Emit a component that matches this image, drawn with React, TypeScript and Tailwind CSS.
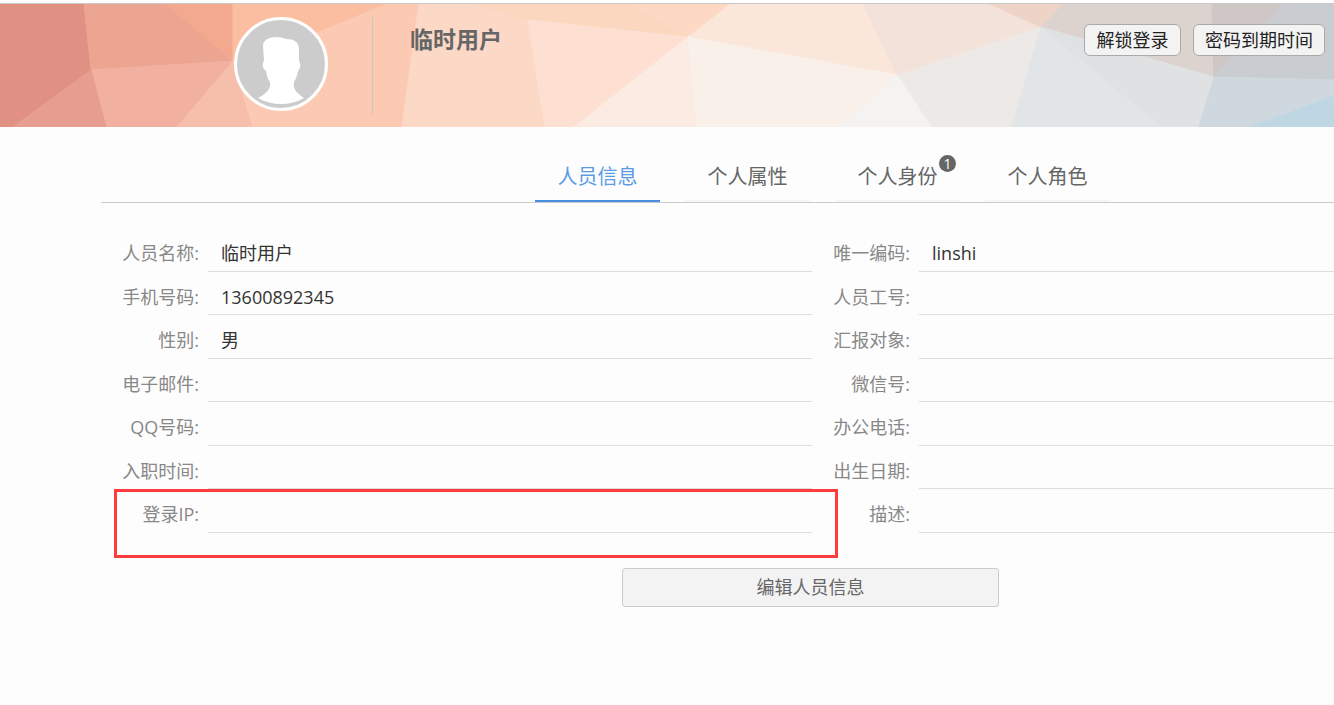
const facets: [string, string][] = [
  ["0,4 84,4 91,70 13,127 0,127", "#e19184"],
  ["84,4 166,4 233,61 91,70", "#eca591"],
  ["166,4 233,4 233,61", "#f3a98d"],
  ["233,4 387,4 319,32 233,61", "#fbbea0"],
  ["91,70 233,61 177,127 106,127", "#f2b1a0"],
  ["91,70 106,127 13,127", "#e59e90"],
  ["233,61 177,127 253,127", "#f6bfab"],
  ["233,61 319,32 387,4 419,4 402,127 253,127", "#fccab3"],
  ["419,4 472,4 528,20 545,127 402,127", "#fbd9c6"],
  ["472,4 630,4 667,24 688,37 528,20", "#fcd7bf"],
  ["528,20 688,37 574,127 545,127", "#fde0d1"],
  ["688,37 697,127 574,127", "#fbebe2"],
  ["630,4 731,4 688,37", "#fdd8c3"],
  ["731,4 863,4 897,75 688,37", "#fbe6da"],
  ["688,37 897,75 841,127 697,127", "#f9f0ea"],
  ["863,4 990,4 1041,27 897,75", "#f3e2d9"],
  ["990,4 1063,4 1041,27", "#eed3c7"],
  ["1063,4 1212,4 1214,77 1041,27", "#dcd3cf"],
  ["897,75 1041,27 1012,127 931,127", "#ece9e6"],
  ["897,75 931,127 841,127", "#f4f3f1"],
  ["1041,27 1163,127 1012,127", "#e1e5e7"],
  ["1041,27 1214,77 1199,127 1163,127", "#dfe1e2"],
  ["1212,4 1284,4 1214,77", "#cfc7c6"],
  ["1284,4 1334,4 1334,80 1214,77", "#c9cdd1"],
  ["1214,77 1334,80 1334,96 1250,127 1199,127", "#d0d8df"],
  ["1250,127 1334,96 1334,127", "#bfd7e3"],
];

const rows = [
  ["人员名称:", "临时用户", "唯一编码:", "linshi"],
  ["手机号码:", "13600892345", "人员工号:", ""],
  ["性别:", "男", "汇报对象:", ""],
  ["电子邮件:", "", "微信号:", ""],
  ["QQ号码:", "", "办公电话:", ""],
  ["入职时间:", "", "出生日期:", ""],
  ["登录IP:", "", "描述:", ""],
];

const tabs = ["人员信息", "个人属性", "个人身份", "个人角色"];

function Avatar() {
  return (
    <svg width="94" height="94" viewBox="0 0 94 94" className="shrink-0">
      <circle cx="47" cy="47" r="45.5" fill="#cccccc" stroke="#ffffff" strokeWidth="3" />
      <path
        d="M29 29 C29 23 35 20 43 20 C47 20 49 21 52 22 C60 22 65 25 65 32 L65 44 C67 46 67 51 64 54 C63 59 62 62 60 65 C59 71 61 75 70 81 C56 89 38 89 24 81 C33 76 37 72 36 65 C33 61 33 58 32 54 C28 51 28 46 30 44 Z"
        fill="#ffffff"
      />
    </svg>
  );
}

export default function App() {
  return (
    <div className="min-h-[705px] w-[1334px] overflow-hidden bg-[#fdfdfd] font-['Open_Sans','Noto_Sans_CJK_SC',sans-serif]">
      <div className="h-[3px] bg-white" />
      <div className="relative flex h-[124px] items-start overflow-hidden border-t border-[#c8c8c8] bg-[#fbd9c6]">
        <svg className="absolute inset-0 blur-[0.6px]" width="1334" height="123" viewBox="0 4 1334 123">
          {facets.map(([points, fill]) => (
            <polygon key={points} points={points} fill={fill} stroke={fill} strokeWidth="1" />
          ))}
        </svg>
        <div className="relative flex w-full items-start pl-[234px] pt-[13px]">
          <Avatar />
          <div className="ml-[44px] h-[98px] w-px bg-[#c5c9c6]" />
          <div className="ml-[37px] mt-[6px] text-[23px] font-bold leading-[32px] text-[#666666]">临时用户</div>
          <div className="ml-auto mr-[9px] mt-[7px] flex gap-3">
            <button className="h-8 w-[97px] rounded-md border border-[#aaaaaa] bg-[#f3f3f3] text-[18px] leading-[28px] text-[#222222]">
              解锁登录
            </button>
            <button className="h-8 w-[132px] rounded-md border border-[#aaaaaa] bg-[#f3f3f3] text-[18px] leading-[28px] text-[#222222]">
              密码到期时间
            </button>
          </div>
        </div>
      </div>

      <div className="ml-[101px] flex h-[76px] items-end gap-[25px] border-b border-[#cccccc] pl-[434px]">
        {tabs.map((tab, i) => (
          <div
            key={tab}
            className={
              i === 0
                ? "relative flex h-[40px] w-[125px] items-start justify-center border-b-2 border-[#4a90e2] text-[20px] leading-[30px] text-[#5b9be6]"
                : "relative flex h-[40px] w-[125px] items-start justify-center border-b-2 border-[#f6f6f6] text-[20px] leading-[30px] text-[#666666]"
            }
          >
            {tab}
            {i === 2 && (
              <span className="absolute left-[104px] top-[-7px] flex h-[17px] w-[17px] items-center justify-center rounded-full bg-[#666666] text-[14px] font-normal leading-none text-white">
                1
              </span>
            )}
          </div>
        ))}
      </div>

      <div className="relative pt-[25px]">
        {rows.map(([leftLabel, leftValue, rightLabel, rightValue]) => (
          <div key={leftLabel} className="flex h-[43.5px] text-[18px] leading-[26px]">
            <div className="w-[199px] pt-[12px] text-right text-[#888888]">{leftLabel}</div>
            <div className="ml-[9px] w-[604px] border-b border-[#dddddd] pl-[13px] pt-[12px] text-[#333333]">{leftValue}</div>
            <div className="w-[98px] pt-[12px] text-right text-[#888888]">{rightLabel}</div>
            <div className="ml-[9px] flex-1 border-b border-[#dddddd] pl-[13px] pt-[12px] text-[#333333]">{rightValue}</div>
          </div>
        ))}
        <div className="absolute left-[114px] top-[286px] h-[69px] w-[724px] border-[3px] border-[#ff3b3b]" />
      </div>

      <div className="ml-[622px] mt-[35px] flex h-[39px] w-[377px] items-center justify-center rounded-[3px] border border-[#cccccc] bg-[#f3f3f3] pt-[1px] text-[18px] text-[#666666]">
        编辑人员信息
      </div>
    </div>
  );
}
